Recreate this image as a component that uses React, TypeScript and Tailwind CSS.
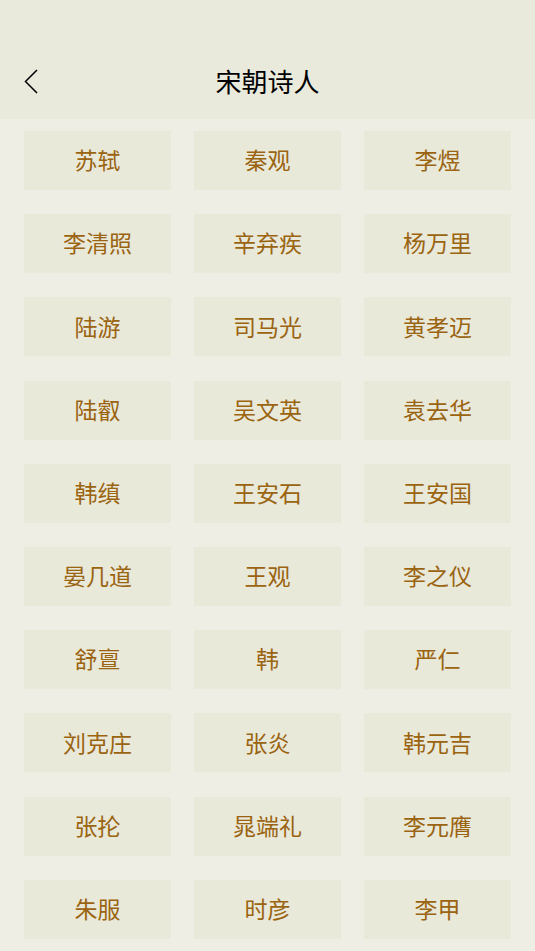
const POETS = [
  "苏轼", "秦观", "李煜",
  "李清照", "辛弃疾", "杨万里",
  "陆游", "司马光", "黄孝迈",
  "陆叡", "吴文英", "袁去华",
  "韩缜", "王安石", "王安国",
  "晏几道", "王观", "李之仪",
  "舒亶", "韩", "严仁",
  "刘克庄", "张炎", "韩元吉",
  "张抡", "晁端礼", "李元膺",
  "朱服", "时彦", "李甲",
];

const font = { fontFamily: '"Noto Sans CJK SC", "Noto Sans", sans-serif' };

export default function App() {
  return (
    <div className="min-h-[951px] w-full bg-[#eeeee4]" style={font}>
      <div className="bg-[#eaeadc] pt-[44px]">
        <div className="relative flex h-[75px] items-center justify-center">
          <button className="absolute left-[24px] top-[25px] text-black">
            <svg width="14" height="25" viewBox="0 0 14 25" fill="none">
              <polyline points="13,1 1.5,12.5 13,24" stroke="currentColor" strokeWidth="1.5" />
            </svg>
          </button>
          <h1 className="-mt-[2px] text-[26px] font-normal text-black">宋朝诗人</h1>
        </div>
      </div>
      <div className="grid grid-cols-3 gap-x-[23px] gap-y-[24.2px] px-[24px] pt-[12px]">
        {POETS.map((name, i) => (
          <div
            key={i}
            className="flex h-[59px] items-center justify-center bg-[#e9e9da] pb-[2px] text-[23px] font-normal text-[#9a6410]"
          >
            {name}
          </div>
        ))}
      </div>
    </div>
  );
}
